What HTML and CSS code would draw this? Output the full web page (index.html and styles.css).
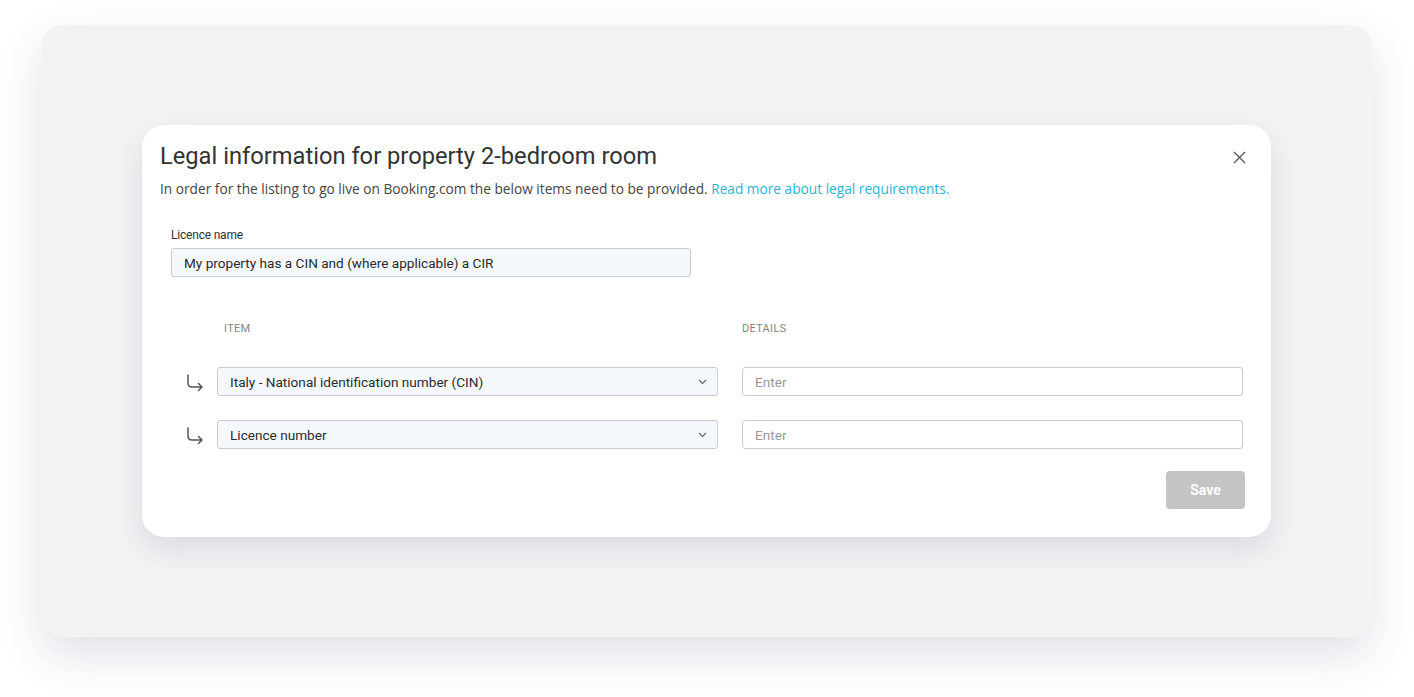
FILE: index.html
```html
<!DOCTYPE html>
<html lang="en">
<head>
  <meta charset="UTF-8" />
  <title>Legal information</title>
  <link rel="stylesheet" href="styles.css">
</head>
<body>

<div class="panel">
  <div class="modal">
    <div class="modal-head">
      <h2>Legal information for property 2-bedroom room</h2>
      <button class="close" aria-label="Close">
        <svg width="13" height="13" viewBox="0 0 13 13"><path d="M1 1 L12 12 M12 1 L1 12" stroke="#555" stroke-width="1.3" fill="none"/></svg>
      </button>
    </div>
    <p class="intro">In order for the listing to go live on Booking.com the below items need to be provided. <a href="#">Read more about legal requirements.</a></p>

    <div class="form">
      <label class="field-label">Licence name</label>
      <div class="input filled wide">My property has a CIN and (where applicable) a CIR</div>

      <div class="grid">
        <span></span>
        <span class="col-head item-head">ITEM</span>
        <span class="col-head">DETAILS</span>

        <span class="sub-arrow">
          <svg width="20" height="20" viewBox="0 0 20 20"><path d="M3 2 V10 Q3 14 7 14 H17 M13.5 10.5 L17 14 L13.5 17.5" stroke="#555" stroke-width="1.5" fill="none" stroke-linecap="round" stroke-linejoin="round"/></svg>
        </span>
        <div class="input filled select">Italy - National identification number (CIN)
          <svg width="9" height="6" viewBox="0 0 9 6"><path d="M1 1 L4.5 4.5 L8 1" stroke="#666" stroke-width="1.2" fill="none"/></svg>
        </div>
        <div class="input placeholder">Enter</div>

        <span class="sub-arrow">
          <svg width="20" height="20" viewBox="0 0 20 20"><path d="M3 2 V10 Q3 14 7 14 H17 M13.5 10.5 L17 14 L13.5 17.5" stroke="#555" stroke-width="1.5" fill="none" stroke-linecap="round" stroke-linejoin="round"/></svg>
        </span>
        <div class="input filled select">Licence number
          <svg width="9" height="6" viewBox="0 0 9 6"><path d="M1 1 L4.5 4.5 L8 1" stroke="#666" stroke-width="1.2" fill="none"/></svg>
        </div>
        <div class="input placeholder">Enter</div>
      </div>

      <div class="actions">
        <button class="save" disabled>Save</button>
      </div>
    </div>
  </div>
</div>

</body>
</html>
```

FILE: styles.css
```css
body {
  margin: 0;
  padding: 25px 0 60px 42px;
  background: #ffffff;
  font-family: Roboto, 'Liberation Sans', sans-serif;
  color: #333;
}

.panel {
  width: 1329px;
  height: 612px;
  box-sizing: border-box;
  padding: 100px;
  background: #f3f3f4;
  border-radius: 20px;
  box-shadow: 0 18px 45px rgba(40, 50, 90, 0.14);
}

.modal {
  background: white;
  border-radius: 22px;
  height: 412px;
  box-sizing: border-box;
  padding: 17px 27px 28px 18px;
  box-shadow: 0 12px 30px rgba(40, 50, 90, 0.12);
}

.modal-head {
  display: flex;
  justify-content: space-between;
  align-items: center;
}

.modal-head h2 {
  margin: 0;
  font-size: 23.7px;
  font-weight: 400;
  line-height: 28px;
  color: #333;
}

.close {
  border: none;
  background: none;
  padding: 0;
  margin-right: -2px;
  margin-top: 3px;
  display: flex;
}

.intro {
  margin: 10px 0 0;
  font-family: 'Open Sans', sans-serif;
  font-size: 13.7px;
  line-height: 18px;
  color: #444;
}

.intro a {
  color: #2bb3d4;
  text-decoration: none;
}

.form {
  padding-left: 11px;
  margin-top: 30px;
}

.field-label {
  display: block;
  font-size: 12px;
  line-height: 14px;
  letter-spacing: -0.2px;
  color: #333;
  margin-bottom: 6px;
}

.input {
  height: 29px;
  box-sizing: border-box;
  border: 1px solid #c9ccd1;
  border-radius: 3px;
  padding: 0 12px;
  display: flex;
  align-items: center;
  font-size: 13.6px;
}

.input.filled {
  background: #f5f9fe;
  color: #2a2a2a;
}

.input.wide {
  width: 520px;
}

.input.placeholder {
  background: white;
  color: #999;
}

.select {
  justify-content: space-between;
  padding-right: 10px;
}

.grid {
  display: grid;
  grid-template-columns: 22px 501px 501px;
  column-gap: 24px;
  row-gap: 24px;
  margin-top: 45px;
  align-items: center;
}

.grid .sub-arrow {
  display: flex;
  padding-left: 14px;
  padding-top: 2px;
}

.sub-arrow svg {
  flex-shrink: 0;
}

.col-head {
  font-size: 11px;
  color: #858585;
  letter-spacing: 0.3px;
  margin-bottom: 8px;
}

.item-head {
  padding-left: 7px;
}

.actions {
  display: flex;
  justify-content: flex-end;
  margin-top: 22px;
  margin-right: -1px;
}

.save {
  width: 79px;
  height: 38px;
  border: none;
  border-radius: 4px;
  background: #c4c4c4;
  color: white;
  font-family: Roboto, sans-serif;
  font-weight: bold;
  font-size: 14px;
}
```
